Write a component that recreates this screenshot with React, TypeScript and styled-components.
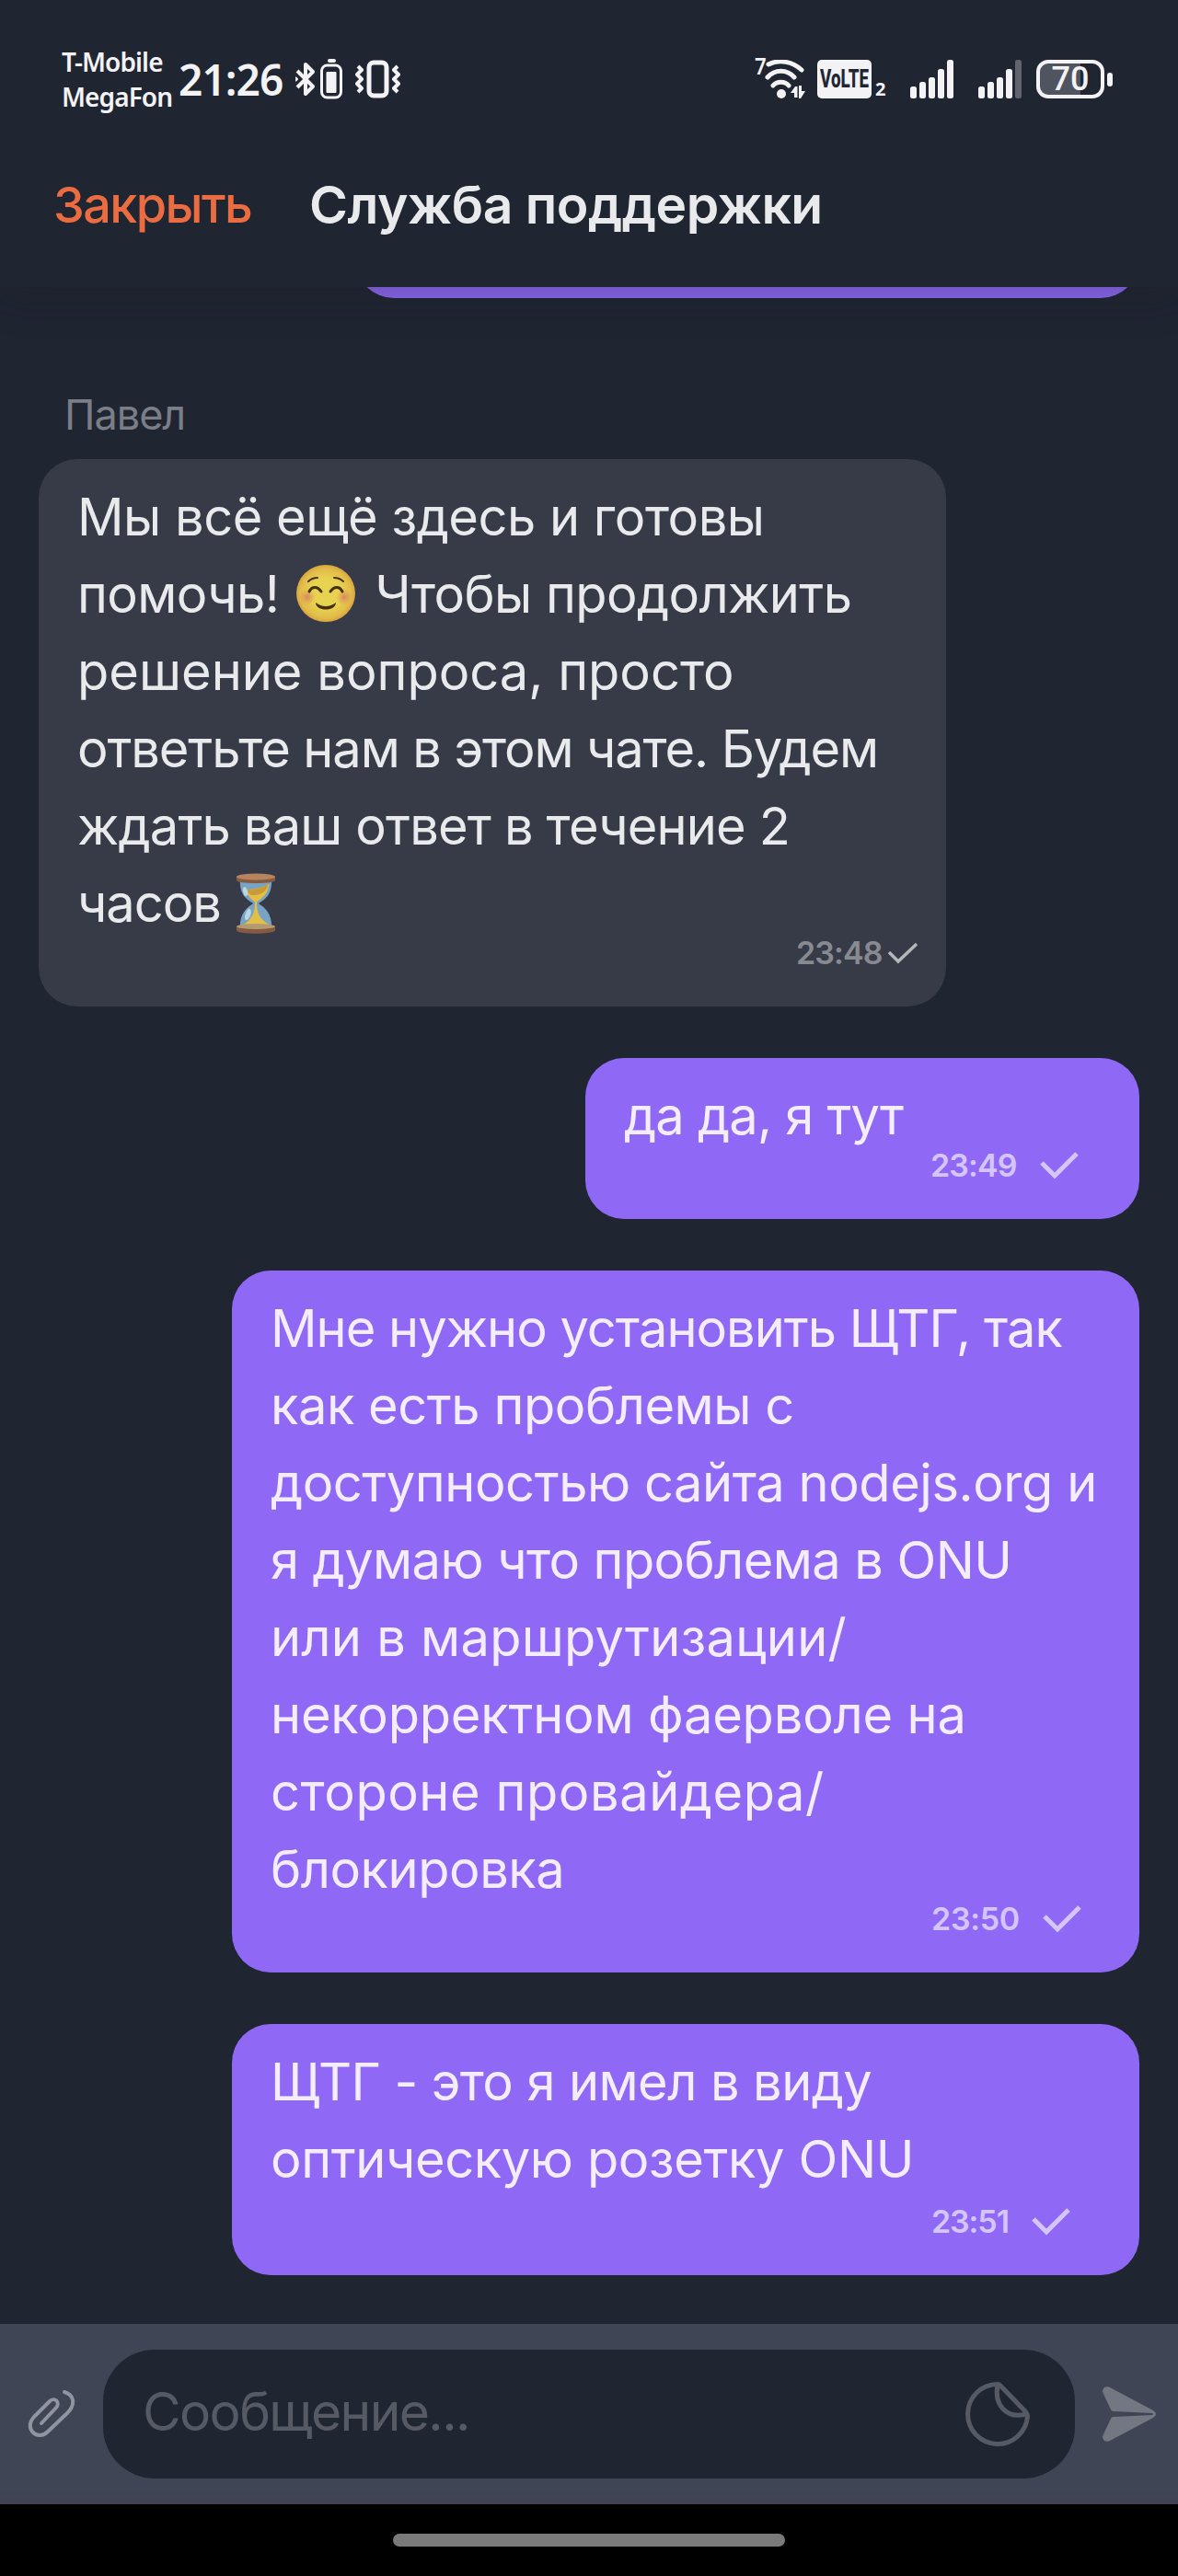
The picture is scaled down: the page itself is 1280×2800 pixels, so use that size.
import { FC } from "react";
import styled, { createGlobalStyle, css } from "styled-components";

const colors = {
  background: "#202532",
  incoming: "#363b47",
  outgoing: "#8f69f6",
  composer: "#404555",
  accent: "#ec6c42",
  status: "#f3f3f5",
  text: "#e9eaec",
};

const GlobalStyle = createGlobalStyle`
  body {
    margin: 0;
    background: ${colors.background};
  }

  * {
    box-sizing: border-box;
  }
`;

const Screen = styled.div`
  width: 1280px;
  height: 2800px;
  display: flex;
  flex-direction: column;
  overflow: hidden;
  background: ${colors.background};
  font-family: Inter, Roboto, "Liberation Sans", sans-serif;
`;

/* status bar */

const StatusBar = styled.div`
  height: 172px;
  flex: none;
  display: flex;
  align-items: center;
  justify-content: space-between;
  padding: 0 71px 0 67px;
  color: ${colors.status};
  font-family: "Noto Sans", "Open Sans", sans-serif;
`;

const StatusGroup = styled.div`
  display: flex;
  align-items: center;
`;

const Carriers = styled.div`
  width: 127px;
  font-size: 28px;
  font-weight: 600;
  line-height: 38px;
  letter-spacing: -0.9px;
  white-space: nowrap;
`;

const Clock = styled.div`
  width: 125px;
  font-size: 46px;
  font-weight: 600;
  line-height: 60px;
  letter-spacing: -0.9px;
  white-space: nowrap;
`;

const StatusIcon = styled.svg<{ $gap?: number }>`
  display: block;
  flex: none;
  margin-left: ${({ $gap = 0 }) => $gap}px;
`;

const WifiBand = styled.span`
  align-self: flex-start;
  width: 12px;
  margin-top: -4px;
  font: 600 26px/20px "Noto Sans", sans-serif;
  transform: scaleX(0.85);
`;

const Volte = styled.span`
  width: 59px;
  height: 42px;
  margin-left: 13px;
  display: flex;
  align-items: center;
  justify-content: center;
  border-radius: 5px;
  background: ${colors.status};
  color: ${colors.background};
`;

const VolteLabel = styled.span`
  font: 800 28px/40px Roboto, sans-serif;
  transform: scaleX(0.67);
`;

const SimIndex = styled.span`
  width: 12px;
  margin: 22px 0 0 4px;
  font: 700 20px/20px "Noto Sans", sans-serif;
`;

const Battery = styled.span`
  width: 74px;
  height: 42px;
  margin-left: 16px;
  display: flex;
  align-items: center;
  justify-content: center;
  border: 4px solid ${colors.status};
  border-radius: 13px;
  background: linear-gradient(to right, #50545f 67%, transparent 67%);
  font: 500 36px/34px Roboto, sans-serif;
`;

const BatteryTip = styled.span`
  width: 6px;
  height: 15px;
  margin-left: 3px;
  border-radius: 3px;
  background: ${colors.status};
`;

/* header */

const Header = styled.header`
  position: relative;
  z-index: 1;
  height: 140px;
  flex: none;
  padding: 19px 58px 0;
  display: flex;
  align-items: flex-start;
  background: ${colors.background};
  box-shadow: 0 6px 40px rgba(24, 30, 34, 0.35);
  clip-path: inset(0 0 -70px 0);
`;

const CloseButton = styled.button`
  width: 278px;
  padding: 0;
  border: 0;
  background: none;
  color: ${colors.accent};
  font: 500 54px/64px Inter, sans-serif;
  letter-spacing: -1.6px;
  text-align: left;
`;

const Title = styled.h1`
  margin: 0;
  color: ${colors.text};
  font-size: 57px;
  font-weight: 600;
  line-height: 64px;
  letter-spacing: -0.5px;
  white-space: nowrap;
`;

/* chat */

const Chat = styled.main`
  flex: 1;
  min-height: 0;
  display: flex;
  flex-direction: column;
  justify-content: flex-end;
  gap: 56px;
  padding: 0 42px 53px;
  overflow: hidden;
`;

const bubble = css<{ $outgoing?: boolean }>`
  flex: none;
  border-radius: 42px;
  background: ${({ $outgoing }) => ($outgoing ? colors.outgoing : colors.incoming)};
`;

const PreviousBubble = styled.div<{ $outgoing?: boolean }>`
  ${bubble}
  width: 852px;
  height: 120px;
  align-self: flex-end;
`;

const Author = styled.div`
  margin: 41px 0 -38px 28px;
  flex: none;
  color: #7b7e86;
  font-size: 45px;
  line-height: 60px;
  letter-spacing: -1px;
`;

const Bubble = styled.article<{ $outgoing?: boolean; $width: number }>`
  ${bubble}
  width: ${({ $width }) => $width}px;
  align-self: ${({ $outgoing }) => ($outgoing ? "flex-end" : "flex-start")};
  padding: 21px 0 41px 42px;
  color: ${({ $outgoing }) => ($outgoing ? "#f3edff" : colors.text)};
`;

const Line = styled.div<{ $spacing?: number }>`
  height: 84px;
  font-size: 56px;
  line-height: 84px;
  letter-spacing: ${({ $spacing = 0 }) => $spacing}px;
  white-space: nowrap;
`;

const Meta = styled.div<{ $outgoing?: boolean; $left: number; $top?: number; $spacing?: number }>`
  height: 34px;
  margin: ${({ $top = -5 }) => $top}px 0 0 ${({ $left }) => $left}px;
  display: flex;
  align-items: center;
  gap: ${({ $outgoing }) => ($outgoing ? 25 : 5)}px;
  color: ${({ $outgoing }) => ($outgoing ? "#d4c5fc" : "#878a91")};
  font-size: 34px;
  font-weight: 600;
  line-height: 34px;
  letter-spacing: ${({ $spacing = -0.9 }) => $spacing}px;
`;

const SmileIcon = styled.svg`
  margin: 0 6px 0 4px;
  vertical-align: -10px;
`;

const HourglassIcon = styled.svg`
  margin-left: 16px;
  vertical-align: -13px;
`;

/* composer */

const Composer = styled.footer`
  height: 196px;
  flex: none;
  display: flex;
  align-items: center;
  padding-left: 30px;
  background: linear-gradient(to bottom, ${colors.composer} 180px, #3e4252 196px);
`;

const Field = styled.div`
  width: 1056px;
  height: 140px;
  margin: 0 30px;
  padding: 0 49px 0 43px;
  display: flex;
  align-items: center;
  justify-content: space-between;
  border-radius: 56px;
  background: ${colors.background};
`;

const Placeholder = styled.span`
  padding-bottom: 5px;
  color: #565a65;
  font-size: 57px;
  line-height: 84px;
  letter-spacing: -1.6px;
`;

const NavigationBar = styled.div`
  height: 78px;
  flex: none;
  padding-top: 32px;
  background: #000;
`;

const HomeHandle = styled.div`
  width: 426px;
  height: 14px;
  margin: 0 auto;
  border-radius: 7px;
  background: #7a7a7a;
`;

const Signal: FC<{ full?: boolean; gap: number }> = ({ full, gap }) => (
  <StatusIcon $gap={gap} width="47" height="42">
    {[13, 18, 23, 32, 42].map((height, i) => (
      <rect
        key={height}
        x={i * 10}
        y={42 - height}
        width="7"
        height={height}
        rx="2.5"
        fill={i === 4 && !full ? "#61646e" : colors.status}
      />
    ))}
  </StatusIcon>
);

const Smile = () => (
  <SmileIcon width="64" height="62" viewBox="0 0 64 62">
    <defs>
      <radialGradient id="face">
        <stop offset="50%" stopColor="#e8d350" />
        <stop offset="85%" stopColor="#e2bd4a" />
        <stop offset="100%" stopColor="#d9a441" />
      </radialGradient>
      <radialGradient id="cheek">
        <stop offset="0%" stopColor="#d97e62" stopOpacity="0.9" />
        <stop offset="100%" stopColor="#dd925a" stopOpacity="0" />
      </radialGradient>
    </defs>
    <ellipse cx="32" cy="31" rx="32" ry="31" fill="url(#face)" />
    <circle cx="12" cy="35" r="9" fill="url(#cheek)" />
    <circle cx="52" cy="35" r="9" fill="url(#cheek)" />
    <g fill="none" stroke="#45320b" strokeWidth="3" strokeLinecap="round">
      <path d="M14 29c3-6 9-6 13 0M37 29c4-6 10-6 13 0" />
      <path d="M13 18c3-3 6-4 10-4M41 14c4 0 7 1 10 4" strokeWidth="2" />
    </g>
    <path d="M21 41q11 8 22 0c0 10-22 10-22 0z" fill="#45320b" />
  </SmileIcon>
);

const Hourglass = () => (
  <HourglassIcon width="44" height="66" viewBox="0 0 46 66" preserveAspectRatio="none">
    <path d="M5 8h36c0 16-7 20-15 25 8 5 15 11 15 26H5c0-15 7-21 15-26C12 28 5 24 5 8z" fill="#78a3c2" />
    <path d="M12 18c8 0 18-2 26-6-1 10-7 15-15 20-6-4-10-8-11-14z" fill="#e4bf48" />
    <path d="M13 18c8 0 17-2 24-6-1 7-8 13-19 12-3-1-4-3-5-6z" fill="#c99a38" />
    <path d="M22 31h2c0 14 4 19 14 25v4H9v-4c10-6 13-13 13-25z" fill="#e4bf48" />
    <ellipse cx="11" cy="20" rx="2.5" ry="5" fill="#bdd5e5" transform="rotate(-15 11 20)" />
    <ellipse cx="14" cy="45" rx="3" ry="6.5" fill="#bdd5e5" transform="rotate(20 14 45)" />
    <path d="M1 4h44v4c0 4-44 4-44 0zM1 58h44v4c0 5-44 5-44 0z" fill="#845a41" />
    <ellipse cx="23" cy="4" rx="22" ry="3.5" fill="#b8835f" />
    <ellipse cx="23" cy="58" rx="22" ry="3" fill="#b59a71" />
  </HourglassIcon>
);

const SmallCheck = () => (
  <svg width="34" height="24" viewBox="0 0 34 24" fill="none" stroke="#b4b6ba" strokeWidth="3.5">
    <path d="M2 11l10 10L32 2" />
  </svg>
);

const Check = () => (
  <svg width="42" height="30" viewBox="0 0 42 30" fill="none" stroke="currentColor" strokeWidth="5">
    <path d="M2 12l14 14L40 2" />
  </svg>
);

interface IMessage {
  width: number;
  // text of the line and its letter spacing
  lines: [string, number][];
  time: string;
  timeSpacing?: number;
  metaLeft: number;
  metaTop?: number;
}

const messages: IMessage[] = [
  {
    width: 602,
    lines: [["да да, я тут", -0.8]],
    time: "23:49",
    metaLeft: 333,
  },
  {
    width: 986,
    lines: [
      ["Мне нужно установить ЩТГ, так", -1],
      ["как есть проблемы с", -0.45],
      ["доступностью сайта nodejs.org и", -0.46],
      ["я думаю что проблема в ONU", -0.6],
      ["или в маршрутизации/", 0.25],
      ["некорректном фаерволе на", -0.2],
      ["стороне провайдера/", 0.55],
      ["блокировка", -0.45],
    ],
    time: "23:50",
    timeSpacing: -0.3,
    metaLeft: 718,
  },
  {
    width: 986,
    lines: [
      ["ЩТГ - это я имел в виду", -0.6],
      ["оптическую розетку ONU", -0.4],
    ],
    time: "23:51",
    timeSpacing: -1.1,
    metaLeft: 718,
    metaTop: 9,
  },
];

const OutgoingMessage: FC<{ message: IMessage }> = ({ message }) => (
  <Bubble $outgoing $width={message.width}>
    {message.lines.map(([text, spacing]) => (
      <Line key={text} $spacing={spacing}>
        {text}
      </Line>
    ))}
    <Meta $outgoing $left={message.metaLeft} $top={message.metaTop} $spacing={message.timeSpacing}>
      <span>{message.time}</span>
      <Check />
    </Meta>
  </Bubble>
);

const Status = () => (
  <StatusBar>
    <StatusGroup>
      <Carriers>
        T-Mobile
        <br />
        MegaFon
      </Carriers>
      <Clock>21:26</Clock>
      <StatusIcon $gap={2} width="22" height="38" fill="none" stroke="currentColor" strokeWidth="4" strokeLinejoin="round">
        <path d="M2 10l17 17-8 8V3l8 8L2 28" />
        <path d="M0 17l2 2-2 2" strokeWidth="2" />
      </StatusIcon>
      <StatusIcon $gap={5} width="24" height="44">
        <rect x="8" y="0" width="9" height="4" rx="2" fill="currentColor" />
        <rect x="1.5" y="7" width="21" height="35" rx="6" fill="none" stroke="currentColor" strokeWidth="3" />
        <rect x="6.5" y="14" width="11" height="23" rx="1" fill="currentColor" />
      </StatusIcon>
      <StatusIcon $gap={14} width="50" height="42" fill="none" stroke="currentColor" strokeWidth="4">
        <rect x="15" y="3" width="19" height="36" rx="5" strokeWidth="5" />
        <path d="M3 7l4 4-5 5 5 5-5 5 5 5-4 4M46 7l-4 4 5 5-5 5 5 5-5 5 4 4" strokeLinejoin="round" />
      </StatusIcon>
    </StatusGroup>
    <StatusGroup>
      <WifiBand>7</WifiBand>
      <StatusIcon width="44" height="42" fill="none" stroke="currentColor" strokeWidth="5" strokeLinecap="round">
        <path d="M5 6c12-6 26-3 36 6M4 20c8-9 21-9 29 0M10 29c4-5 13-5 17 0" transform="translate(-1 -1)" />
        <circle cx="18" cy="37" r="5" fill="currentColor" stroke="none" />
        <path d="M33 29h2.500v12H32v-5h-4zM37 28h3v6h4l-5 8h-2z" fill="currentColor" stroke="none" />
      </StatusIcon>
      <Volte>
        <VolteLabel>VoLTE</VolteLabel>
      </Volte>
      <SimIndex>2</SimIndex>
      <Signal full gap={26} />
      <Signal gap={27} />
      <Battery>70</Battery>
      <BatteryTip />
    </StatusGroup>
  </StatusBar>
);

const App = () => {
  return (
    <Screen>
      <GlobalStyle />
      <Status />
      <Header>
        <CloseButton>Закрыть</CloseButton>
        <Title>Служба поддержки</Title>
      </Header>
      <Chat>
        <PreviousBubble $outgoing />
        <Author>Павел</Author>
        <Bubble $width={986}>
          <Line $spacing={-0.5}>Мы всё ещё здесь и готовы</Line>
          <Line $spacing={-0.6}>
            помочь! <Smile /> Чтобы продолжить
          </Line>
          <Line>решение вопроса, просто</Line>
          <Line $spacing={-1.13}>ответьте нам в этом чате. Будем</Line>
          <Line $spacing={-0.85}>ждать ваш ответ в течение 2</Line>
          <Line $spacing={-1}>
            часов
            <Hourglass />
          </Line>
          <Meta $left={781}>
            <span>23:48</span>
            <SmallCheck />
          </Meta>
        </Bubble>
        {messages.map((message) => (
          <OutgoingMessage key={message.time} message={message} />
        ))}
      </Chat>
      <Composer>
        <svg width="52" height="52" viewBox="0 0 52 52" fill="none" stroke="#9093a0" strokeWidth="4" strokeLinecap="round">
          <path d="M15 36l16-17c5-6-2-12-7-7L7 29C-5 42 11 56 22 45l21-20C53 15 50 5 40 2" />
        </svg>
        <Field>
          <Placeholder>Сообщение...</Placeholder>
          <svg width="70" height="70" viewBox="0 0 70 70" fill="none" stroke="#565a65" strokeWidth="5" strokeLinejoin="round">
            <path d="M35 2.500A32.500 32.500 0 1 0 67.500 37Q67 34 65 32L38 4Q36.500 2.500 35 2.500z" />
            <path d="M35 4C31 24 44 41 66 35" />
          </svg>
        </Field>
        <svg width="58" height="60" viewBox="0 0 58 60" fill="#737781">
          <path d="M7 .6L55 26q3 2 3 4t-3 4L7 59.400C2 61-1 57 .5 53L9 35q1-2 3-2l42-2q2-1 0-2l-42-2q-2 0-3-2L.5 7C-1 3 2-1 7 .6z" />
        </svg>
      </Composer>
      <NavigationBar>
        <HomeHandle />
      </NavigationBar>
    </Screen>
  );
};

export default App;
